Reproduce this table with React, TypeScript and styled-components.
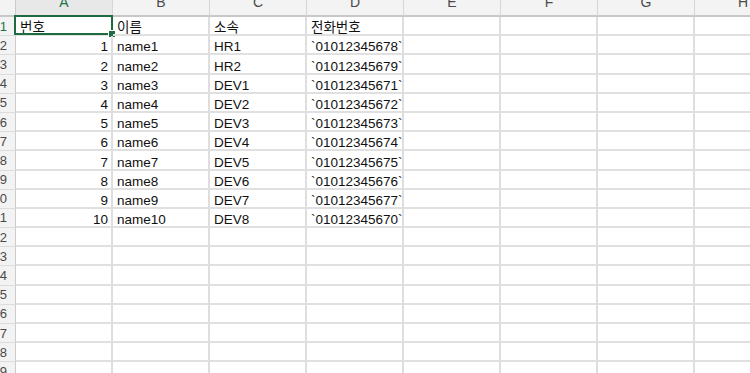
import styled, { createGlobalStyle } from "styled-components";

const GlobalStyle = createGlobalStyle`
  html, body {
    margin: 0;
    padding: 0;
    background: #ffffff;
    overflow: hidden;
  }
  body {
    font-family: "Liberation Sans", "Noto Sans CJK KR", sans-serif;
  }
`;

const COLUMNS = ["A", "B", "C", "D", "E", "F", "G", "H"];
const ROW_COUNT = 19;

const DATA: (string | number)[][] = [
  ["번호", "이름", "소속", "전화번호"],
  [1, "name1", "HR1", "`01012345678`"],
  [2, "name2", "HR2", "`01012345679`"],
  [3, "name3", "DEV1", "`01012345671`"],
  [4, "name4", "DEV2", "`01012345672`"],
  [5, "name5", "DEV3", "`01012345673`"],
  [6, "name6", "DEV4", "`01012345674`"],
  [7, "name7", "DEV5", "`01012345675`"],
  [8, "name8", "DEV6", "`01012345676`"],
  [9, "name9", "DEV7", "`01012345677`"],
  [10, "name10", "DEV8", "`01012345670`"],
];

const Sheet = styled.div`
  display: grid;
  grid-template-columns: 16px repeat(8, 97px);
  grid-template-rows: 17px repeat(${ROW_COUNT}, 19.2px);
  width: max-content;
`;

const Corner = styled.div`
  box-sizing: border-box;
  background: #f3f3f3;
  border-right: 1px solid #cbcbcb;
  border-bottom: 2px solid #c8c8c8;
`;

const ColumnHeader = styled.div<{ $active?: boolean }>`
  box-sizing: border-box;
  display: flex;
  justify-content: center;
  align-items: flex-start;
  overflow: hidden;
  background: ${(p) => (p.$active ? "#e8e8e8" : "#f3f3f3")};
  border-right: 1px solid #d6d6d6;
  border-bottom: 2px solid #c8c8c8;
  color: ${(p) => (p.$active ? "#217346" : "#4a4a4a")};
  font-size: 14px;
  line-height: 13px;

  span {
    margin-top: -4px;
  }
`;

const RowHeader = styled.div<{ $active?: boolean }>`
  box-sizing: border-box;
  display: flex;
  justify-content: flex-end;
  align-items: center;
  overflow: hidden;
  padding-right: 8px;
  background: #f3f3f3;
  border-right: 1px solid #cbcbcb;
  border-bottom: 1px solid #dcdcdc;
  color: ${(p) => (p.$active ? "#217346" : "#4a4a4a")};
  font-size: 13px;
  white-space: nowrap;
`;

const Cell = styled.div<{ $align?: "left" | "right" }>`
  position: relative;
  box-sizing: border-box;
  display: flex;
  align-items: flex-end;
  justify-content: ${(p) => (p.$align === "right" ? "flex-end" : "flex-start")};
  padding: 0 3px 0 ${(p) => (p.$align === "right" ? "3px" : "4px")};
  border-right: 2px solid #dedede;
  border-bottom: 2px solid #e0e0e0;
  color: #111111;
  font-size: 13.5px;
  line-height: 13px;
  white-space: nowrap;
`;

const Selection = styled.div`
  position: absolute;
  top: -2px;
  left: -2px;
  right: -2px;
  bottom: -1px;
  border: 2px solid #1f6b41;
  pointer-events: none;
`;

const FillHandle = styled.div`
  position: absolute;
  right: -4px;
  bottom: -4px;
  width: 6px;
  height: 6px;
  background: #1f6b41;
  box-shadow: 0 0 0 1px #ffffff;
`;

export default function App() {
  const rows = Array.from({ length: ROW_COUNT }, (_, i) => i + 1);
  return (
    <>
      <GlobalStyle />
      <Sheet>
        <Corner />
        {COLUMNS.map((c) => (
          <ColumnHeader key={c} $active={c === "A"}>
            <span>{c}</span>
          </ColumnHeader>
        ))}
        {rows.map((r) => {
          const values = DATA[r - 1] ?? [];
          return [
            <RowHeader key={`h${r}`} $active={r === 1}>
              {r}
            </RowHeader>,
            ...COLUMNS.map((c, ci) => {
              const v = values[ci];
              const isNum = typeof v === "number";
              return (
                <Cell key={`${c}${r}`} $align={isNum ? "right" : "left"}>
                  {v}
                  {r === 1 && ci === 0 && (
                    <Selection>
                      <FillHandle />
                    </Selection>
                  )}
                </Cell>
              );
            }),
          ];
        })}
      </Sheet>
    </>
  );
}
